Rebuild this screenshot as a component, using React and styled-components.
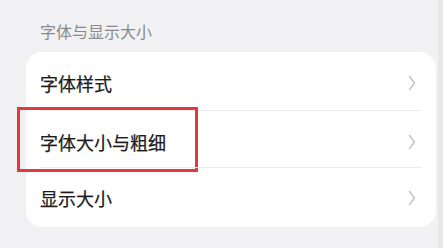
import styled, { createGlobalStyle } from "styled-components";

const GlobalStyle = createGlobalStyle`
    html, body {
        margin: 0;
        padding: 0;
        background: #f1f1f3;
    }
    body {
        font-family: "Noto Sans CJK SC", "Noto Sans", sans-serif;
    }
`;

const StyledScreen = styled.div`
    display: flex;
    width: 443px;
    height: 248px;
    overflow: hidden;
    background: #f1f1f3;
`;
const StyledPage = styled.div`
    flex: 1;
    display: flex;
    flex-direction: column;
    padding: 0 2px 0 26px;
`;
const StyledScrollTrack = styled.div`
    width: 5px;
    background: #e8e8ea;
`;
const StyledSectionTitle = styled.h3`
    margin: 0;
    height: 52px;
    padding: 10px 0 0 14px;
    display: flex;
    align-items: center;
    font-size: 16px;
    font-weight: 400;
    color: #8a8a8c;
    line-height: 1;
    box-sizing: border-box;
`;
const StyledCard = styled.div`
    display: flex;
    flex-direction: column;
    background: #ffffff;
    border-radius: 16px;
`;
const StyledRow = styled.div`
    position: relative;
    display: flex;
    align-items: center;
    justify-content: space-between;
    height: ${(p) => p.$height}px;
    margin: 0 14px;
    padding-top: ${(p) => p.$offset}px;
    box-sizing: border-box;
    border-top: ${(p) => (p.$first ? "none" : "1px solid #ececee")};
`;
const StyledLabel = styled.span`
    font-size: 18px;
    font-weight: 400;
    color: #1c1c1e;
    line-height: 1;
    -webkit-text-stroke: 0.25px #1c1c1e;
`;
const StyledChevron = styled.svg`
    width: 8px;
    height: 16px;
    margin-right: 6px;
`;
const StyledHighlight = styled.div`
    position: absolute;
    left: -23px;
    top: -4px;
    width: 181px;
    height: 65px;
    border: 3px solid #e0393e;
    box-sizing: border-box;
    pointer-events: none;
`;

const rows = [
    { id: 1, label: "字体样式", height: 58, offset: 4 },
    { id: 2, label: "字体大小与粗细", height: 57, offset: 5, highlight: true },
    { id: 3, label: "显示大小", height: 60, offset: 0 },
];

const Chevron = () => (
    <StyledChevron viewBox="0 0 8 16">
        <path d="M1.5 1.5 L6.5 8 L1.5 14.5" fill="none" stroke="#c4c4c6" strokeWidth="1.5" strokeLinecap="round" strokeLinejoin="round" />
    </StyledChevron>
);

const App = () => {
    return (
        <>
            <GlobalStyle />
            <StyledScreen>
                <StyledPage>
                    <StyledSectionTitle>字体与显示大小</StyledSectionTitle>
                    <StyledCard>
                        {rows.map((item, i) => (
                            <StyledRow key={item.id} $first={i === 0} $height={item.height} $offset={item.offset}>
                                <StyledLabel>{item.label}</StyledLabel>
                                <Chevron />
                                {item.highlight && <StyledHighlight />}
                            </StyledRow>
                        ))}
                    </StyledCard>
                </StyledPage>
                <StyledScrollTrack />
            </StyledScreen>
        </>
    );
};

export default App;
